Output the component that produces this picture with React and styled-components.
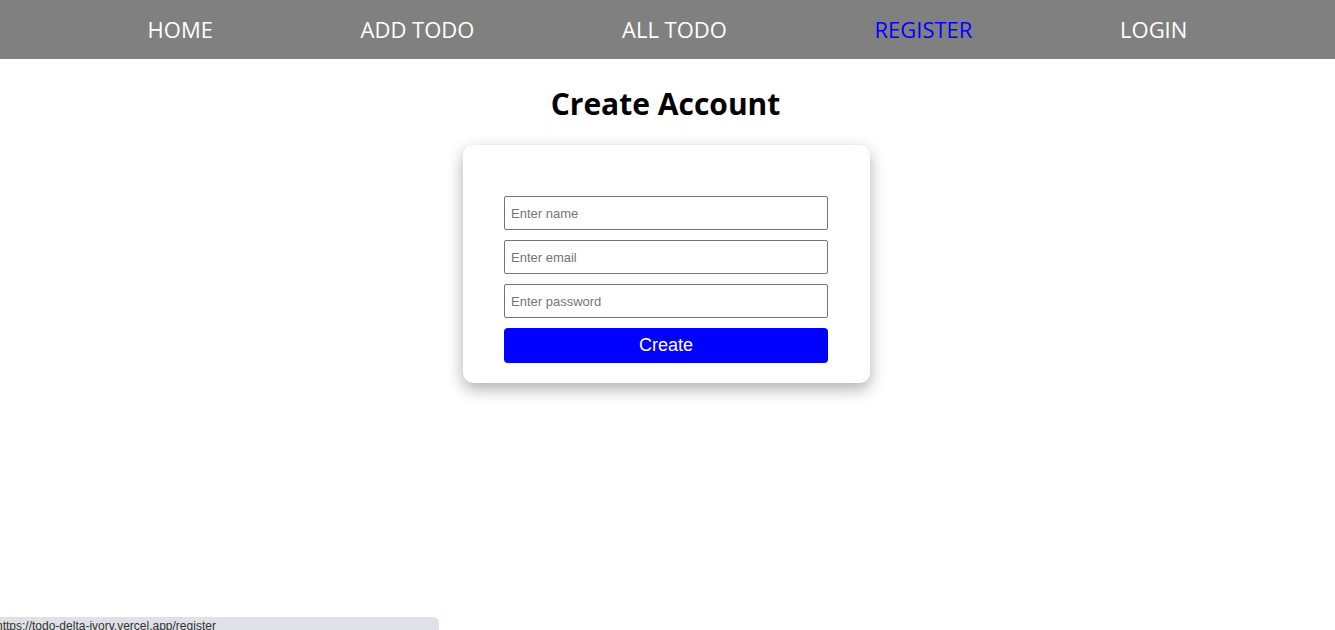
import React from "react";
import styled, { createGlobalStyle } from "styled-components";

const GlobalStyle = createGlobalStyle`
	html, body {
		margin: 0;
		padding: 0;
		background: #fff;
		font-family: "Open Sans", "Noto Sans", sans-serif;
	}
	* {
		box-sizing: border-box;
	}
`;

const Nav = styled.nav`
	height: 59px;
	background: #808080;
	display: flex;
	align-items: center;
	justify-content: space-evenly;
`;

const NavLink = styled.a`
	font-family: "Open Sans", "Noto Sans", sans-serif;
	font-size: 22px;
	color: ${(p) => (p.active ? "#0000ff" : "#fff")};
	text-decoration: none;
	cursor: pointer;
	margin-bottom: 2px;
`;

const Page = styled.main`
	min-height: calc(100vh - 59px);
	display: flex;
	flex-direction: column;
	align-items: center;
`;

const Title = styled.h1`
	font-family: "Open Sans", "Noto Sans", sans-serif;
	font-size: 30px;
	font-weight: 700;
	color: #000;
	margin: 25px 4px 21px 0;
	line-height: 40px;
`;

const Card = styled.form`
	width: 407px;
	margin-right: 2px;
	padding: 51px 42px 20px 41px;
	background: #fff;
	border-radius: 10px;
	box-shadow: 0 6px 16px rgba(0, 0, 0, 0.32);
	display: flex;
	flex-direction: column;
	gap: 10px;
`;

const Input = styled.input`
	height: 34px;
	width: 100%;
	border: 1px solid #767676;
	border-radius: 2px;
	padding: 0 6px;
	font-family: "Liberation Sans", Arial, sans-serif;
	font-size: 13px;
	color: #000;
	outline: none;

	&::placeholder {
		color: #757575;
	}
`;

const Button = styled.button`
	height: 35px;
	width: 100%;
	border: none;
	border-radius: 4px;
	background: #0000ff;
	color: #fff;
	font-family: "Liberation Sans", Arial, sans-serif;
	font-size: 18px;
	cursor: pointer;
`;

const StatusBar = styled.div`
	position: fixed;
	left: 0;
	bottom: 0;
	width: 439px;
	height: 13px;
	background: #dee1e6;
	border-top-right-radius: 6px;
	overflow: hidden;
	font-family: "Liberation Sans", Arial, sans-serif;
	font-size: 12px;
	line-height: 18px;
	color: #333;
	white-space: nowrap;
	text-indent: -4px;
`;

const links = [
	{ label: "HOME" },
	{ label: "ADD TODO" },
	{ label: "ALL TODO" },
	{ label: "REGISTER", active: true },
	{ label: "LOGIN" },
];

function App() {
	return (
		<>
			<GlobalStyle />
			<Nav>
				{links.map((l) => (
					<NavLink key={l.label} active={l.active ? 1 : 0}>
						{l.label}
					</NavLink>
				))}
			</Nav>
			<Page>
				<Title>Create Account</Title>
				<Card onSubmit={(e) => e.preventDefault()}>
					<Input type='text' placeholder='Enter name' />
					<Input type='email' placeholder='Enter email' />
					<Input type='password' placeholder='Enter password' />
					<Button type='submit'>Create</Button>
				</Card>
			</Page>
			<StatusBar>https://todo-delta-ivory.vercel.app/register</StatusBar>
		</>
	);
}

export default App;
